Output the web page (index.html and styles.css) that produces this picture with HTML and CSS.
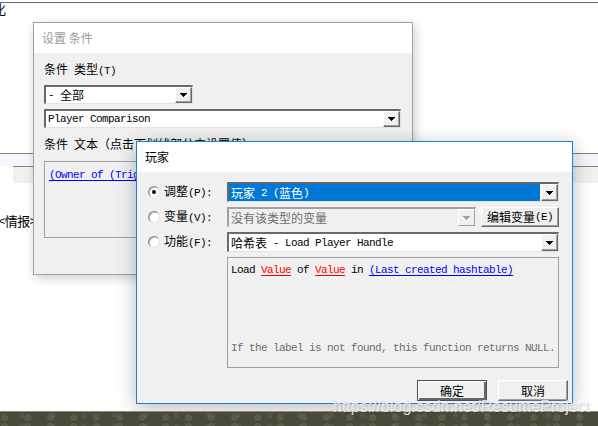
FILE: index.html
```html
<!DOCTYPE html>
<html lang="zh-CN">
<head>
    <meta charset="UTF-8">
    <meta name="viewport" content="width=device-width, initial-scale=1.0">
    <title>设置 条件 - 玩家</title>
    <link rel="stylesheet" href="styles.css">
</head>
<body>
    <div class="desktop">
        <!-- okno editora v pozadi -->
        <div class="topline"></div>
        <div class="bg-char">化</div>
        <div class="bg-list">
            <div class="bg-list-head"></div>
            <div class="bg-list-row"></div>
        </div>
        <div class="bg-info">&lt;情报&gt;</div>

        <div class="window win-back">
            <div class="titlebar inactive">设置 条件</div>
            <div class="win-body back-body">
                <div class="label">条件<span class="en"> </span>类型<span class="en">(T)</span></div>
                <div class="combo combo-sm w-short">
                    <div class="combo-text"><span class="en">- </span>全部</div>
                    <div class="combo-btn"><svg width="7" height="4" viewBox="0 0 7 4"><path d="M0 0h7v1h-1v1h-1v1h-1v1h-1v-1h-1v-1h-1v-1h-1z"/></svg></div>
                </div>
                <div class="combo combo-sm w-long gap-top">
                    <div class="combo-text"><span class="en">Player Comparison</span></div>
                    <div class="combo-btn"><svg width="7" height="4" viewBox="0 0 7 4"><path d="M0 0h7v1h-1v1h-1v1h-1v1h-1v-1h-1v-1h-1v-1h-1z"/></svg></div>
                </div>
                <div class="label label-memo">条件<span class="en"> </span>文本（点击下划线部分来设置值）</div>
                <div class="memo back-memo">
                    <span class="en link">(Owner of (Triggering unit))</span><span class="en"> Equal to </span><span class="en link">Player 2 (Blue)</span>
                </div>
            </div>
        </div>

        <div class="window win-front">
            <div class="titlebar">玩家</div>
            <div class="win-body front-body">
                <div class="choices">
                    <span class="radio checked"></span>
                    <span class="choice-label">调整<span class="en">(P):</span></span>
                    <div class="combo">
                        <div class="combo-text selected">玩家<span class="en"> 2 (</span>蓝色<span class="en">)</span></div>
                        <div class="combo-btn"><svg width="7" height="4" viewBox="0 0 7 4"><path d="M0 0h7v1h-1v1h-1v1h-1v1h-1v-1h-1v-1h-1v-1h-1z"/></svg></div>
                    </div>

                    <span class="radio"></span>
                    <span class="choice-label">变量<span class="en">(V):</span></span>
                    <div class="combo-row">
                        <div class="combo disabled">
                            <div class="combo-text">没有该类型的变量</div>
                            <div class="combo-btn"><svg width="7" height="4" viewBox="0 0 7 4"><path d="M0 0h7v1h-1v1h-1v1h-1v1h-1v-1h-1v-1h-1v-1h-1z"/></svg></div>
                        </div>
                        <button class="btn btn-edit">编辑变量<span class="en">(E)</span></button>
                    </div>

                    <span class="radio"></span>
                    <span class="choice-label">功能<span class="en">(F):</span></span>
                    <div class="combo">
                        <div class="combo-text">哈希表<span class="en"> - Load Player Handle</span></div>
                        <div class="combo-btn"><svg width="7" height="4" viewBox="0 0 7 4"><path d="M0 0h7v1h-1v1h-1v1h-1v1h-1v-1h-1v-1h-1v-1h-1z"/></svg></div>
                    </div>
                </div>

                <div class="memo front-memo">
                    <div><span class="en">Load </span><span class="en val">Value</span><span class="en"> of </span><span class="en val">Value</span><span class="en"> in </span><span class="en link">(Last created hashtable)</span></div>
                    <div class="hint"><span class="en">If the label is not found, this function returns NULL.</span></div>
                </div>

                <div class="actions">
                    <button class="btn btn-default">确定</button>
                    <button class="btn">取消</button>
                </div>
            </div>
        </div>

        <div class="ground"></div>
        <div class="watermark">https://blog.csdn.net/ResumeProject</div>
    </div>
</body>
</html>
```

FILE: styles.css
```css
* {
    box-sizing: border-box;
}
body {
    margin: 0;
    background: #fff;
    font-family: "Noto Sans CJK SC", sans-serif;
    font-size: 12px;
    color: #000;
}
.desktop {
    position: relative;
    width: 598px;
    height: 426px;
    overflow: hidden;
}
.en {
    font-family: "Liberation Mono", monospace;
    font-size: 11px;
    letter-spacing: -0.6px;
    white-space: pre;
}

/* pozadie */
.topline {
    position: absolute;
    top: 2px;
    left: 0;
    right: 0;
    height: 1px;
    background: #6a6a6a;
}
.bg-char {
    position: absolute;
    top: 1px;
    left: -7px;
    font-size: 13px;
    line-height: 16px;
}
.bg-list {
    position: absolute;
    top: 153px;
    left: 0;
    right: 0;
}
.bg-list-head {
    height: 13px;
    border-top: 1px solid #828282;
    background: #f3f6fb;
}
.bg-list-row {
    height: 17px;
    margin-left: 13px;
    border-top: 1px solid #828282;
    background: #f0f0f0;
}
.bg-info {
    position: absolute;
    top: 212px;
    left: -2px;
    font-size: 13px;
    line-height: 18px;
    letter-spacing: -0.5px;
}
.ground {
    position: absolute;
    left: 0;
    right: 0;
    top: 411px;
    bottom: 0;
    border-top: 1px solid #8a8a80;
    background-color: #4a4a3b;
    background-image:
        radial-gradient(circle at 20% 60%, rgba(120, 120, 100, 0.35) 0 3px, transparent 4px),
        radial-gradient(circle at 70% 30%, rgba(90, 110, 90, 0.35) 0 2px, transparent 3px);
    background-size: 23px 9px, 31px 11px;
}
.watermark {
    position: absolute;
    left: 333px;
    top: 397px;
    font-family: "Liberation Sans", sans-serif;
    font-size: 16px;
    line-height: 20px;
    color: rgba(235, 235, 235, 0.9);
    text-shadow: 1px 1px 1px rgba(0, 0, 0, 0.12);
    z-index: 5;
}

/* okna */
.window {
    position: absolute;
    display: flex;
    flex-direction: column;
    background: #f0f0f0;
}
.win-back {
    left: 33px;
    top: 22px;
    width: 380px;
    height: 253px;
    border: 1px solid #a0a0a0;
    box-shadow: 2px 3px 10px rgba(0, 0, 0, 0.2);
}
.win-front {
    left: 136px;
    top: 141px;
    width: 437px;
    height: 263px;
    border: 1px solid #1883d7;
    box-shadow: 0 4px 18px rgba(0, 0, 0, 0.28);
}
.titlebar {
    height: 30px;
    flex: none;
    display: flex;
    align-items: center;
    padding-left: 8px;
    background: #fff;
    line-height: 16px;
}
.titlebar.inactive {
    color: #9a9a9a;
}
.win-body {
    flex: 1;
    display: flex;
    flex-direction: column;
}
.back-body {
    padding: 9px 10px 0 10px;
}
.front-body {
    padding: 10px 4px 2px 11px;
}
.label {
    line-height: 14px;
    white-space: nowrap;
}
.label-memo {
    margin-top: 9px;
}

/* combo */
.combo {
    display: flex;
    height: 20px;
    border-style: solid;
    border-width: 2px 1px 1px 2px;
    border-color: #696969 #e3e3e3 #e3e3e3 #696969;
    background: #fff;
}
.combo-sm {
    height: 19px;
    margin-top: 7px;
}
.combo-sm.gap-top {
    margin-top: 5px;
}
.w-short {
    width: 149px;
}
.w-long {
    width: 357px;
}
.combo-text {
    flex: 1;
    display: flex;
    align-items: center;
    padding-left: 2px;
    line-height: 14px;
    white-space: nowrap;
    overflow: hidden;
}
.combo-text.selected {
    background: #0078d7;
    color: #fff;
    margin-right: 1px;
}
.combo-btn {
    width: 17px;
    flex: none;
    display: flex;
    align-items: center;
    justify-content: center;
    background: #f0f0f0;
    border: 1px solid;
    border-color: #fff #696969 #696969 #fff;
    box-shadow: inset -1px -1px #a0a0a0;
}
.combo-btn svg {
    fill: #000;
    shape-rendering: crispEdges;
}
.combo.disabled {
    width: 249px;
    border-color: #a0a0a0 #f0f0f0 #f0f0f0 #a0a0a0;
    background: #f0f0f0;
    color: #6d6d6d;
}
.combo.disabled .combo-btn {
    border-color: #fff #a0a0a0 #a0a0a0 #fff;
    box-shadow: none;
}
.combo.disabled .combo-btn svg {
    fill: #a0a0a0;
}

/* volby */
.choices {
    display: grid;
    grid-template-columns: 16px 63px 332px;
    grid-auto-rows: 20px;
    row-gap: 5px;
    align-items: center;
}
.choice-label {
    line-height: 14px;
    white-space: nowrap;
}
.radio {
    position: relative;
    width: 12px;
    height: 12px;
    border-radius: 50%;
    background: #fff;
    border: 1px solid;
    border-color: #8a8a8a #e3e3e3 #e3e3e3 #8a8a8a;
    box-shadow: inset 1px 1px 0 #bdbdbd;
}
.radio.checked::after {
    content: "";
    position: absolute;
    left: 3px;
    top: 3px;
    width: 4px;
    height: 4px;
    border-radius: 50%;
    background: #000;
}
.combo-row {
    display: flex;
    gap: 5px;
    height: 20px;
}

/* texty */
.memo {
    border: 1px solid #a0a0a0;
    background: #f0f0f0;
    line-height: 12px;
    white-space: nowrap;
    overflow: hidden;
}
.back-memo {
    margin-top: 8px;
    width: 357px;
    height: 77px;
    padding: 5px 4px;
}
.front-memo {
    margin: 5px 0 0 79px;
    width: 332px;
    height: 111px;
    padding: 4px 3px;
}
.hint {
    margin-top: 64px;
    color: #6d6d6d;
}
.val {
    color: #f00;
    text-decoration: underline;
    text-underline-offset: 2px;
}
.link {
    color: #00f;
    text-decoration: underline;
    text-underline-offset: 2px;
}

/* tlacidla */
.btn {
    width: 70px;
    height: 21px;
    padding: 0;
    display: flex;
    align-items: center;
    justify-content: center;
    font-family: inherit;
    font-size: 12px;
    line-height: 14px;
    color: #000;
    background: #f0f0f0;
    border: 1px solid;
    border-color: #fff #696969 #696969 #fff;
    box-shadow: inset -1px -1px #a0a0a0;
}
.btn-default {
    border-color: #505050;
    box-shadow: inset 1px 1px #fff, inset -2px -2px #696969;
}
.btn-edit {
    width: 78px;
    height: 20px;
    flex: none;
}
.actions {
    margin-top: auto;
    display: flex;
    justify-content: flex-end;
    gap: 11px;
}
```
